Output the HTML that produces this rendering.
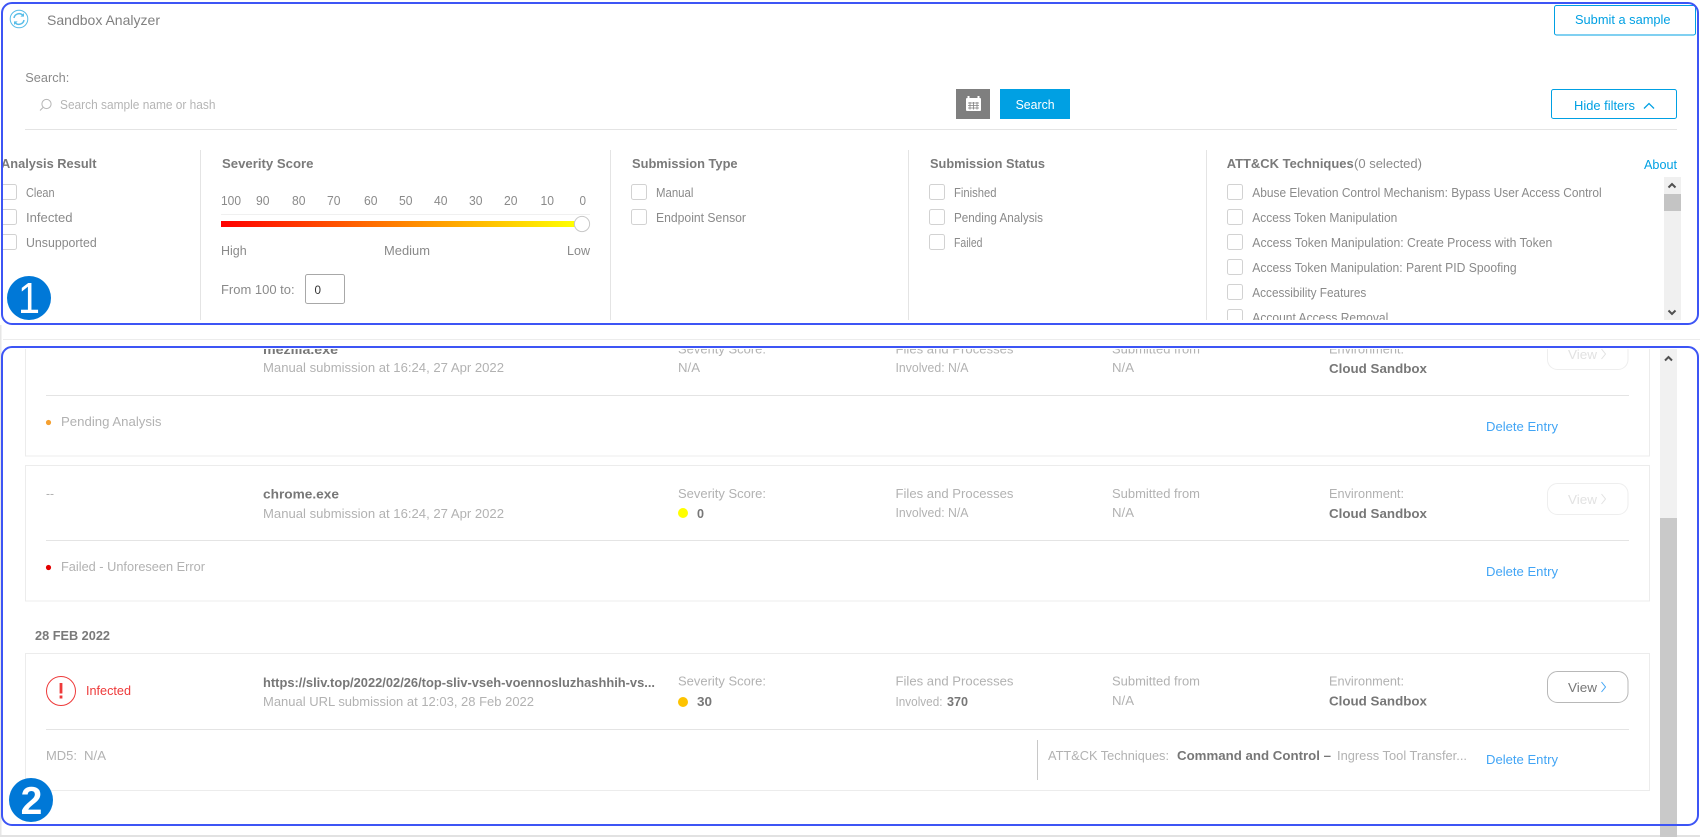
<!DOCTYPE html>
<html><head><meta charset="utf-8"><title>Sandbox Analyzer</title>
<style>
html,body{margin:0;padding:0;background:#fff;width:1700px;height:837px;overflow:hidden}
svg{display:block}
text{font-family:"Liberation Sans",sans-serif;font-size:12.5px;fill:#8a8a8a;white-space:pre}
.h{font-weight:bold;font-size:13px;fill:#7a7a7a}
.l{font-size:13px;fill:#b2b2b2}
.n{font-size:13px;font-weight:bold;fill:#777}
.b{fill:#00a0e3;font-size:13px}
.d{fill:#42a5f5;font-size:13px}
.cb{fill:#fff;stroke:#d2d2d2;stroke-width:1}
.s{fill:#e4e4e4}
</style></head><body>
<svg width="1700" height="837" viewBox="0 0 1700 837" xmlns="http://www.w3.org/2000/svg">
<defs>
<linearGradient id="g"><stop offset="0" stop-color="#ff0000"/><stop offset="1" stop-color="#ffff00"/></linearGradient>
<clipPath id="c1"><rect x="2" y="0" width="1698" height="320"/></clipPath>
<clipPath id="c2"><rect x="0" y="349" width="1700" height="488"/></clipPath>
</defs>
<rect width="1700" height="837" fill="#fff"/>
<rect x="3" y="339" width="1697" height="1" fill="#ececec"/>
<rect x="0" y="325" width="1.5" height="512" fill="#e6e6e6"/>
<rect x="0" y="835" width="1700" height="2" fill="#e2e2e2"/>

<!-- header -->
<g fill="none" stroke="#58bde8" stroke-width="1">
<circle cx="19" cy="19" r="8.8"/>
<path d="M14 18a5.2 5.2 0 0 1 8.800-2.800" stroke-width="1.500"/>
<path d="M24 20a5.2 5.2 0 0 1-8.800 2.800" stroke-width="1.500"/>
</g>
<path d="M24 13v3.600h-3.600z M14 25v-3.600h3.600z" fill="#58bde8"/>
<text x="47" y="25" style="font-size:14px;fill:#808080" textLength="113" lengthAdjust="spacingAndGlyphs">Sandbox Analyzer</text>
<rect x="1554.5" y="5.5" width="141" height="29.5" rx="2" fill="#fff" stroke="#00a0e3"/>
<text class="b" x="1575" y="24" textLength="95.5" lengthAdjust="spacingAndGlyphs">Submit a sample</text>

<text x="25.3" y="82" textLength="44" lengthAdjust="spacingAndGlyphs">Search:</text>
<circle cx="46.5" cy="104" r="4.6" fill="none" stroke="#b5b5b5"/>
<path d="M43 107.5l-3 3" stroke="#b5b5b5" fill="none"/>
<text x="60" y="109" style="fill:#b5b5b5" textLength="155.5" lengthAdjust="spacingAndGlyphs">Search sample name or hash</text>

<rect x="956" y="89" width="34" height="30" fill="#7f7f7f"/>
<rect x="966" y="98" width="15" height="13" fill="#fff" rx="1"/>
<path d="M968.5 96v4M978.5 96v4" stroke="#fff" stroke-width="2"/>
<path d="M968 103h11M968 105.5h11M968 108h11M970 102v7.5M973.5 102v7.5M977 102v7.5" stroke="#7f7f7f" stroke-width=".8"/>
<rect x="1000" y="89" width="70" height="30" fill="#00a0e3"/>
<text x="1015.6" y="109" style="fill:#fff;font-size:13px" textLength="39" lengthAdjust="spacingAndGlyphs">Search</text>
<rect x="1551.5" y="89.5" width="125" height="29" rx="2" fill="#fff" stroke="#00a0e3"/>
<text class="b" x="1574" y="110" textLength="61" lengthAdjust="spacingAndGlyphs">Hide filters</text>
<path d="M1644 108.5l5-5 5 5" fill="none" stroke="#00a0e3" stroke-width="1.3"/>
<rect x="25" y="129" width="1652" height="1" class="s"/>

<!-- filters -->
<g clip-path="url(#c1)">
<rect x="200" y="150" width="1" height="170" class="s"/>
<rect x="610" y="150" width="1" height="170" class="s"/>
<rect x="908" y="150" width="1" height="170" class="s"/>
<rect x="1206" y="150" width="1" height="170" class="s"/>

<text class="h" x="1" y="168" textLength="95.5" lengthAdjust="spacingAndGlyphs">Analysis Result</text>
<rect class="cb" x="0.5" y="184.5" width="16" height="15" rx="2"/>
<rect class="cb" x="0.5" y="209.5" width="16" height="15" rx="2"/>
<rect class="cb" x="0.5" y="234.5" width="16" height="15" rx="2"/>
<text x="26" y="197" textLength="28.6" lengthAdjust="spacingAndGlyphs">Clean</text>
<text x="26" y="222" textLength="46.6" lengthAdjust="spacingAndGlyphs">Infected</text>
<text x="26" y="247" textLength="70.7" lengthAdjust="spacingAndGlyphs">Unsupported</text>

<text class="h" x="222" y="168" textLength="91.5" lengthAdjust="spacingAndGlyphs">Severity Score</text>
<text x="221" y="205" textLength="20" lengthAdjust="spacingAndGlyphs">100</text>
<text x="256" y="205" textLength="13.5" lengthAdjust="spacingAndGlyphs">90</text>
<text x="292" y="205" textLength="13.5" lengthAdjust="spacingAndGlyphs">80</text>
<text x="327" y="205" textLength="13.5" lengthAdjust="spacingAndGlyphs">70</text>
<text x="364" y="205" textLength="13.5" lengthAdjust="spacingAndGlyphs">60</text>
<text x="399" y="205" textLength="13.5" lengthAdjust="spacingAndGlyphs">50</text>
<text x="434" y="205" textLength="13.5" lengthAdjust="spacingAndGlyphs">40</text>
<text x="469" y="205" textLength="13.5" lengthAdjust="spacingAndGlyphs">30</text>
<text x="504" y="205" textLength="13.5" lengthAdjust="spacingAndGlyphs">20</text>
<text x="540.5" y="205" textLength="13.5" lengthAdjust="spacingAndGlyphs">10</text>
<text x="579.5" y="205" textLength="6.5" lengthAdjust="spacingAndGlyphs">0</text>
<rect x="221" y="214" width="369" height="1" fill="#f0f0f0"/>
<rect x="221" y="221" width="354" height="6" fill="url(#g)"/>
<circle cx="582" cy="224" r="7.6" fill="#fff" stroke="#c8c8c8"/>
<text x="221" y="255" style="font-size:13px" textLength="25.7" lengthAdjust="spacingAndGlyphs">High</text>
<text x="384" y="255" style="font-size:13px" textLength="46" lengthAdjust="spacingAndGlyphs">Medium</text>
<text x="567" y="255" style="font-size:13px" textLength="23" lengthAdjust="spacingAndGlyphs">Low</text>
<text x="221" y="294" style="font-size:13px" textLength="73.6" lengthAdjust="spacingAndGlyphs">From 100 to:</text>
<rect x="305.5" y="274.5" width="39" height="29" rx="2" fill="#fff" stroke="#a8a8a8"/>
<text x="314.5" y="294" style="fill:#333;font-size:12px" textLength="6.5" lengthAdjust="spacingAndGlyphs">0</text>

<text class="h" x="632" y="168" textLength="105.6" lengthAdjust="spacingAndGlyphs">Submission Type</text>
<rect class="cb" x="631.5" y="184.5" width="15" height="15" rx="2"/>
<rect class="cb" x="631.5" y="209.5" width="15" height="15" rx="2"/>
<text x="656" y="197" textLength="37.4" lengthAdjust="spacingAndGlyphs">Manual</text>
<text x="656" y="222" textLength="90" lengthAdjust="spacingAndGlyphs">Endpoint Sensor</text>

<text class="h" x="930" y="168" textLength="115" lengthAdjust="spacingAndGlyphs">Submission Status</text>
<rect class="cb" x="929.5" y="184.5" width="15" height="15" rx="2"/>
<rect class="cb" x="929.5" y="209.5" width="15" height="15" rx="2"/>
<rect class="cb" x="929.5" y="234.5" width="15" height="15" rx="2"/>
<text x="954" y="197" textLength="42.5" lengthAdjust="spacingAndGlyphs">Finished</text>
<text x="954" y="222" textLength="89" lengthAdjust="spacingAndGlyphs">Pending Analysis</text>
<text x="954" y="247" textLength="28.5" lengthAdjust="spacingAndGlyphs">Failed</text>

<text class="h" x="1226.7" y="168" textLength="127" lengthAdjust="spacingAndGlyphs">ATT&amp;CK Techniques</text>
<text x="1354" y="168" style="font-size:13px" textLength="68" lengthAdjust="spacingAndGlyphs">(0 selected)</text>
<text class="b" x="1644" y="169" textLength="33" lengthAdjust="spacingAndGlyphs">About</text>
<rect class="cb" x="1227.5" y="184.5" width="15" height="15" rx="2"/>
<rect class="cb" x="1227.5" y="209.5" width="15" height="15" rx="2"/>
<rect class="cb" x="1227.5" y="234.5" width="15" height="15" rx="2"/>
<rect class="cb" x="1227.5" y="259.5" width="15" height="15" rx="2"/>
<rect class="cb" x="1227.5" y="284.5" width="15" height="15" rx="2"/>
<rect class="cb" x="1227.5" y="309.5" width="15" height="15" rx="2"/>
<text x="1252.3" y="197" textLength="349.4" lengthAdjust="spacingAndGlyphs">Abuse Elevation Control Mechanism: Bypass User Access Control</text>
<text x="1252.3" y="222" textLength="145" lengthAdjust="spacingAndGlyphs">Access Token Manipulation</text>
<text x="1252.3" y="247" textLength="300" lengthAdjust="spacingAndGlyphs">Access Token Manipulation: Create Process with Token</text>
<text x="1252.3" y="272" textLength="264.4" lengthAdjust="spacingAndGlyphs">Access Token Manipulation: Parent PID Spoofing</text>
<text x="1252.3" y="297" textLength="114" lengthAdjust="spacingAndGlyphs">Accessibility Features</text>
<text x="1252.3" y="322" textLength="136" lengthAdjust="spacingAndGlyphs">Account Access Removal</text>
<rect x="1664" y="177" width="17" height="143" fill="#f0f0f0"/>
<rect x="1664" y="194" width="17" height="17" fill="#c4c4c4"/>
<path d="M1668.5 187.5l3.5-3.5 3.5 3.5" fill="none" stroke="#505050" stroke-width="2"/>
<path d="M1668.5 310.5l3.5 3.5 3.5-3.5" fill="none" stroke="#505050" stroke-width="2"/>
</g>

<!-- list -->
<g clip-path="url(#c2)">
<!-- card 1 -->
<rect x="25.5" y="320" width="1624" height="136" fill="#fff" stroke="#ececec"/>
<text class="n" x="263" y="354" textLength="75" lengthAdjust="spacingAndGlyphs">mezilla.exe</text>
<text class="l" x="263" y="372" textLength="241" lengthAdjust="spacingAndGlyphs">Manual submission at 16:24, 27 Apr 2022</text>
<text class="l" x="678" y="353.500" textLength="88" lengthAdjust="spacingAndGlyphs">Severity Score:</text>
<text class="l" x="678" y="372" textLength="22" lengthAdjust="spacingAndGlyphs">N/A</text>
<text class="l" x="895.500" y="353.500" textLength="118" lengthAdjust="spacingAndGlyphs">Files and Processes</text>
<text class="l" x="895.500" y="372" textLength="73" lengthAdjust="spacingAndGlyphs">Involved: N/A</text>
<text class="l" x="1112" y="353.500" textLength="88" lengthAdjust="spacingAndGlyphs">Submitted from</text>
<text class="l" x="1112" y="372" textLength="22" lengthAdjust="spacingAndGlyphs">N/A</text>
<text class="l" x="1329" y="353.500" textLength="75" lengthAdjust="spacingAndGlyphs">Environment:</text>
<text class="n" x="1329" y="373" textLength="98" lengthAdjust="spacingAndGlyphs">Cloud Sandbox</text>
<rect x="1547.5" y="338.5" width="80.5" height="31" rx="10" fill="#fff" stroke="#eeeeee"/>
<text x="1568" y="359" style="fill:#e2e2e2;font-size:13px" textLength="29" lengthAdjust="spacingAndGlyphs">View</text>
<path d="M1601.5 349l4 5-4 5" fill="none" stroke="#e2e2e2"/>
<rect x="46" y="395" width="1583" height="1" class="s"/>
<circle cx="48.5" cy="422.5" r="2.6" fill="#f5a030"/>
<text class="l" x="61" y="426" textLength="100.5" lengthAdjust="spacingAndGlyphs">Pending Analysis</text>
<text class="d" x="1486" y="431" textLength="72" lengthAdjust="spacingAndGlyphs">Delete Entry</text>

<!-- card 2 -->
<rect x="25.5" y="465.5" width="1624" height="135.5" fill="#fff" stroke="#ececec"/>
<text class="l" x="46" y="498" textLength="8" lengthAdjust="spacingAndGlyphs">--</text>
<text class="n" x="263" y="498.500" textLength="76" lengthAdjust="spacingAndGlyphs">chrome.exe</text>
<text class="l" x="263" y="518" textLength="241" lengthAdjust="spacingAndGlyphs">Manual submission at 16:24, 27 Apr 2022</text>
<text class="l" x="678" y="498" textLength="88" lengthAdjust="spacingAndGlyphs">Severity Score:</text>
<circle cx="683" cy="513" r="5" fill="#ffff00"/>
<text class="n" x="697" y="518" textLength="7" lengthAdjust="spacingAndGlyphs">0</text>
<text class="l" x="895.500" y="498" textLength="118" lengthAdjust="spacingAndGlyphs">Files and Processes</text>
<text class="l" x="895.500" y="517" textLength="73" lengthAdjust="spacingAndGlyphs">Involved: N/A</text>
<text class="l" x="1112" y="498" textLength="88" lengthAdjust="spacingAndGlyphs">Submitted from</text>
<text class="l" x="1112" y="517" textLength="22" lengthAdjust="spacingAndGlyphs">N/A</text>
<text class="l" x="1329" y="498" textLength="75" lengthAdjust="spacingAndGlyphs">Environment:</text>
<text class="n" x="1329" y="518" textLength="98" lengthAdjust="spacingAndGlyphs">Cloud Sandbox</text>
<rect x="1547.5" y="483.5" width="80.5" height="31" rx="10" fill="#fff" stroke="#eeeeee"/>
<text x="1568" y="504" style="fill:#e2e2e2;font-size:13px" textLength="29" lengthAdjust="spacingAndGlyphs">View</text>
<path d="M1601.5 494l4 5-4 5" fill="none" stroke="#e2e2e2"/>
<rect x="46" y="540" width="1583" height="1" class="s"/>
<circle cx="48.5" cy="567.5" r="2.6" fill="#e30000"/>
<text class="l" x="61" y="571" textLength="144" lengthAdjust="spacingAndGlyphs">Failed - Unforeseen Error</text>
<text class="d" x="1486" y="576" textLength="72" lengthAdjust="spacingAndGlyphs">Delete Entry</text>

<text class="h" x="35" y="640" textLength="75" lengthAdjust="spacingAndGlyphs">28 FEB 2022</text>

<!-- card 3 -->
<rect x="25.5" y="653.5" width="1624" height="137" fill="#fff" stroke="#ececec"/>
<circle cx="61" cy="691" r="14.5" fill="#fff" stroke="#ee3a3a" stroke-width="1"/>
<rect x="59.6" y="683" width="2.8" height="10.5" fill="#ee3a3a"/>
<rect x="59.6" y="695.5" width="2.8" height="3" fill="#ee3a3a"/>
<text x="86" y="695" style="fill:#ee3a3a;font-size:13px" textLength="45" lengthAdjust="spacingAndGlyphs">Infected</text>
<text class="n" x="263" y="687" textLength="392" lengthAdjust="spacingAndGlyphs">https://sliv.top/2022/02/26/top-sliv-vseh-voennosluzhashhih-vs...</text>
<text class="l" x="263" y="706" textLength="271" lengthAdjust="spacingAndGlyphs">Manual URL submission at 12:03, 28 Feb 2022</text>
<text class="l" x="678" y="685.500" textLength="88" lengthAdjust="spacingAndGlyphs">Severity Score:</text>
<circle cx="683" cy="702" r="5" fill="#fdc300"/>
<text class="n" x="697" y="706" textLength="15" lengthAdjust="spacingAndGlyphs">30</text>
<text class="l" x="895.500" y="685.500" textLength="118" lengthAdjust="spacingAndGlyphs">Files and Processes</text>
<text class="l" x="895.500" y="706" textLength="47" lengthAdjust="spacingAndGlyphs">Involved:</text>
<text class="n" x="947" y="706" textLength="21" lengthAdjust="spacingAndGlyphs">370</text>
<text class="l" x="1112" y="685.500" textLength="88" lengthAdjust="spacingAndGlyphs">Submitted from</text>
<text class="l" x="1112" y="705" textLength="22" lengthAdjust="spacingAndGlyphs">N/A</text>
<text class="l" x="1329" y="685.500" textLength="75" lengthAdjust="spacingAndGlyphs">Environment:</text>
<text class="n" x="1329" y="705.500" textLength="98" lengthAdjust="spacingAndGlyphs">Cloud Sandbox</text>
<rect x="1547.5" y="671.5" width="80.5" height="31" rx="10" fill="#fff" stroke="#b8b8b8"/>
<text x="1568" y="692" style="fill:#777;font-size:13px" textLength="29" lengthAdjust="spacingAndGlyphs">View</text>
<path d="M1601.5 682l4 5-4 5" fill="none" stroke="#42a5f5"/>
<rect x="46" y="729" width="1583" height="1" class="s"/>
<text class="l" x="46" y="760" textLength="31" lengthAdjust="spacingAndGlyphs">MD5:</text>
<text class="l" x="84" y="760" textLength="22" lengthAdjust="spacingAndGlyphs">N/A</text>
<rect x="1037" y="740" width="1" height="40" fill="#c8c8c8"/>
<text class="l" x="1048" y="760" textLength="121" lengthAdjust="spacingAndGlyphs">ATT&amp;CK Techniques:</text>
<text class="n" x="1177" y="760" textLength="154" lengthAdjust="spacingAndGlyphs">Command and Control –</text>
<text class="l" x="1337" y="760" textLength="130" lengthAdjust="spacingAndGlyphs">Ingress Tool Transfer...</text>
<text class="d" x="1486" y="764" textLength="72" lengthAdjust="spacingAndGlyphs">Delete Entry</text>

<!-- main scrollbar -->
<rect x="1660" y="349" width="17" height="488" fill="#f1f1f1"/>
<rect x="1660" y="518" width="17" height="319" fill="#c9c9c9"/>
<path d="M1665 360.500l3.500-3.500 3.500 3.500" fill="none" stroke="#505050" stroke-width="2"/>
</g>
<rect x="0" y="835" width="1660" height="2" fill="#e2e2e2"/>
<rect x="1677" y="835" width="23" height="2" fill="#e2e2e2"/>

<!-- annotation frames -->
<rect x="2" y="3" width="1696" height="321" rx="10" fill="none" stroke="#3d55f5" stroke-width="2"/>
<rect x="2" y="347" width="1696" height="478" rx="10" fill="none" stroke="#3d55f5" stroke-width="2"/>
<ellipse cx="29" cy="298" rx="22" ry="22" fill="#0078d7"/>
<text x="18" y="313" style="font-size:44px;fill:#fff" textLength="22" lengthAdjust="spacingAndGlyphs">1</text>
<ellipse cx="31" cy="800" rx="22" ry="22" fill="#0078d7"/>
<text x="31.500" y="814" text-anchor="middle" style="font-size:39px;fill:#fff;font-weight:bold">2</text>
</svg>
</body></html>
